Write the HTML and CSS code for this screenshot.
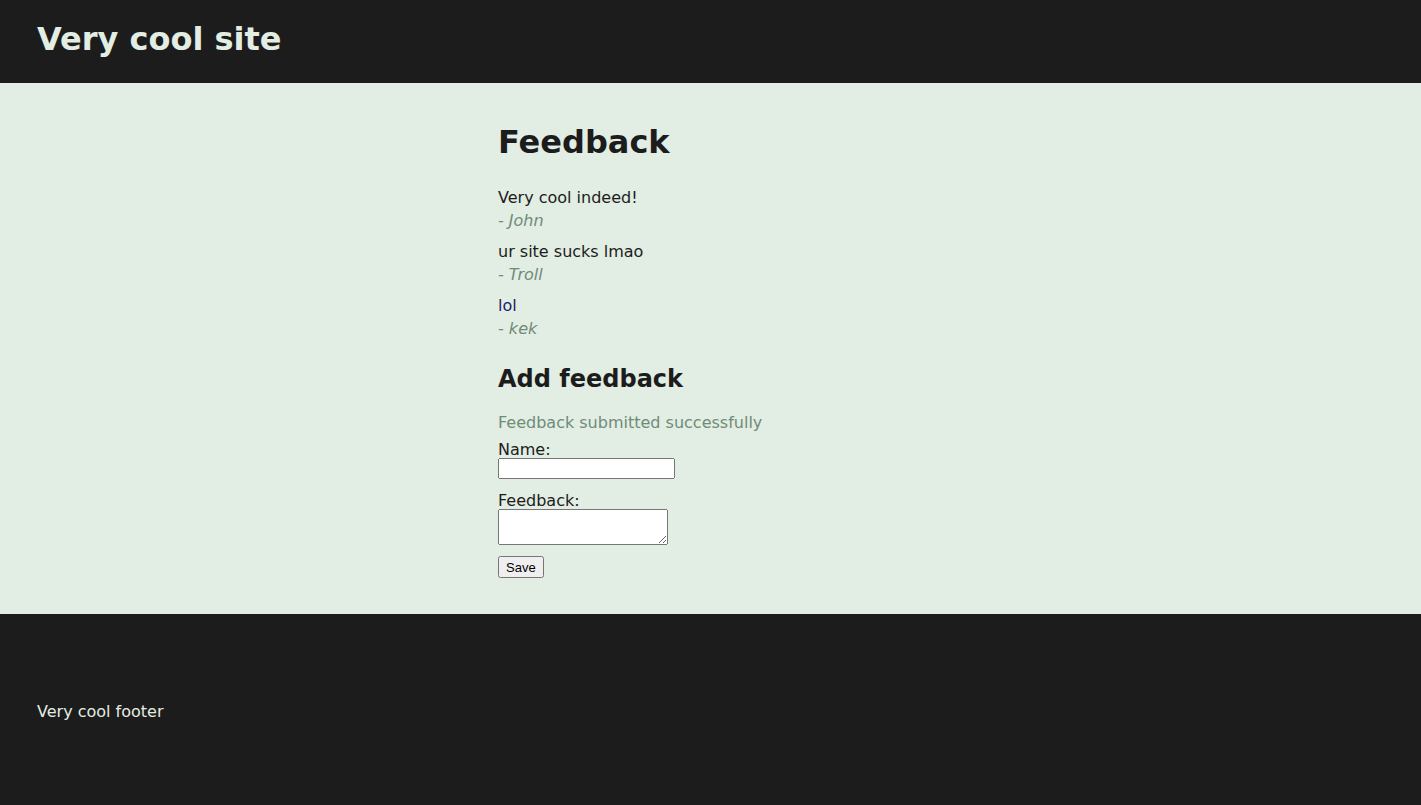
FILE: index.html
```html
<!doctype html>
<html lang="en">
  <head>
    <meta charset="UTF-8" />
    <meta name="viewport" content="width=device-width, initial-scale=1.0" />
    <title>Very cool site</title>
    <link rel="stylesheet" href="styles.css">
  </head>
  <body>
    <header class="site-header">
      <h1>Very cool site</h1>
    </header>

    <main class="content">
      <h1>Feedback</h1>

      <div class="feedback-list">
        <div class="feedback">
          <div class="text">Very cool indeed!</div>
          <div class="author">- John</div>
        </div>
        <div class="feedback">
          <div class="text">ur site sucks lmao</div>
          <div class="author">- Troll</div>
        </div>
        <div class="feedback">
          <div class="text odd">lol</div>
          <div class="author">- kek</div>
        </div>
      </div>

      <h2>Add feedback</h2>

      <p class="notice">Feedback submitted successfully</p>
      <form class="feedback-form" onsubmit="return false">
        <div class="field">
          <label for="name">Name:</label>
          <input type="text" id="name" name="name" />
        </div>
        <div class="field last">
          <label for="text">Feedback:</label>
          <textarea id="text" name="text"></textarea>
        </div>
        <button type="submit">Save</button>
      </form>
    </main>

    <footer class="site-footer">
      <p>Very cool footer</p>
    </footer>
  </body>
</html>
```

FILE: styles.css
```css
body {
  margin: 0;
  font-family: "DejaVu Sans", Verdana, sans-serif;
  font-size: 16px;
  color: #1c1c1c;
  background: #1c1c1c;
}
.site-header {
  background: #1c1c1c;
  height: 83px;
  padding: 0 37px;
  display: flex;
  align-items: center;
}
.site-header h1 {
  margin: 0;
  color: #e2ede3;
  font-size: 32px;
  line-height: 1;
  padding-bottom: 6px;
}
.content {
  background: #e2ede3;
  padding: 20px 0 36px 498px;
}
.content h1 {
  font-size: 32px;
  margin: 20px 0 25px;
}
.content h2 {
  font-size: 24px;
  margin: 25px 0 20px;
}
.feedback {
  margin-bottom: 8px;
  line-height: 23px;
}
.text.odd {
  color: #1e1e6a;
}
.author {
  color: #6e8c78;
  font-style: italic;
}
.notice {
  color: #6e8c78;
  margin: 0 0 10px;
}
.field {
  margin-bottom: 14px;
}
.field.last {
  margin-bottom: 11px;
}
.field label {
  display: block;
  line-height: 16px;
}
.field input {
  width: 177px;
  height: 21px;
  box-sizing: border-box;
  margin: 0;
  vertical-align: top;
}
.field textarea {
  width: 170px;
  height: 36px;
  box-sizing: border-box;
  margin: 0;
  vertical-align: top;
}
button {
  font-family: "Liberation Sans", Arial, sans-serif;
  font-size: 13px;
  padding: 1px 6px;
  height: 22px;
}
.site-footer {
  background: #1c1c1c;
  color: #e2ede3;
  padding: 88px 37px 84px;
}
.site-footer p {
  margin: 0;
  line-height: 19px;
}
```
